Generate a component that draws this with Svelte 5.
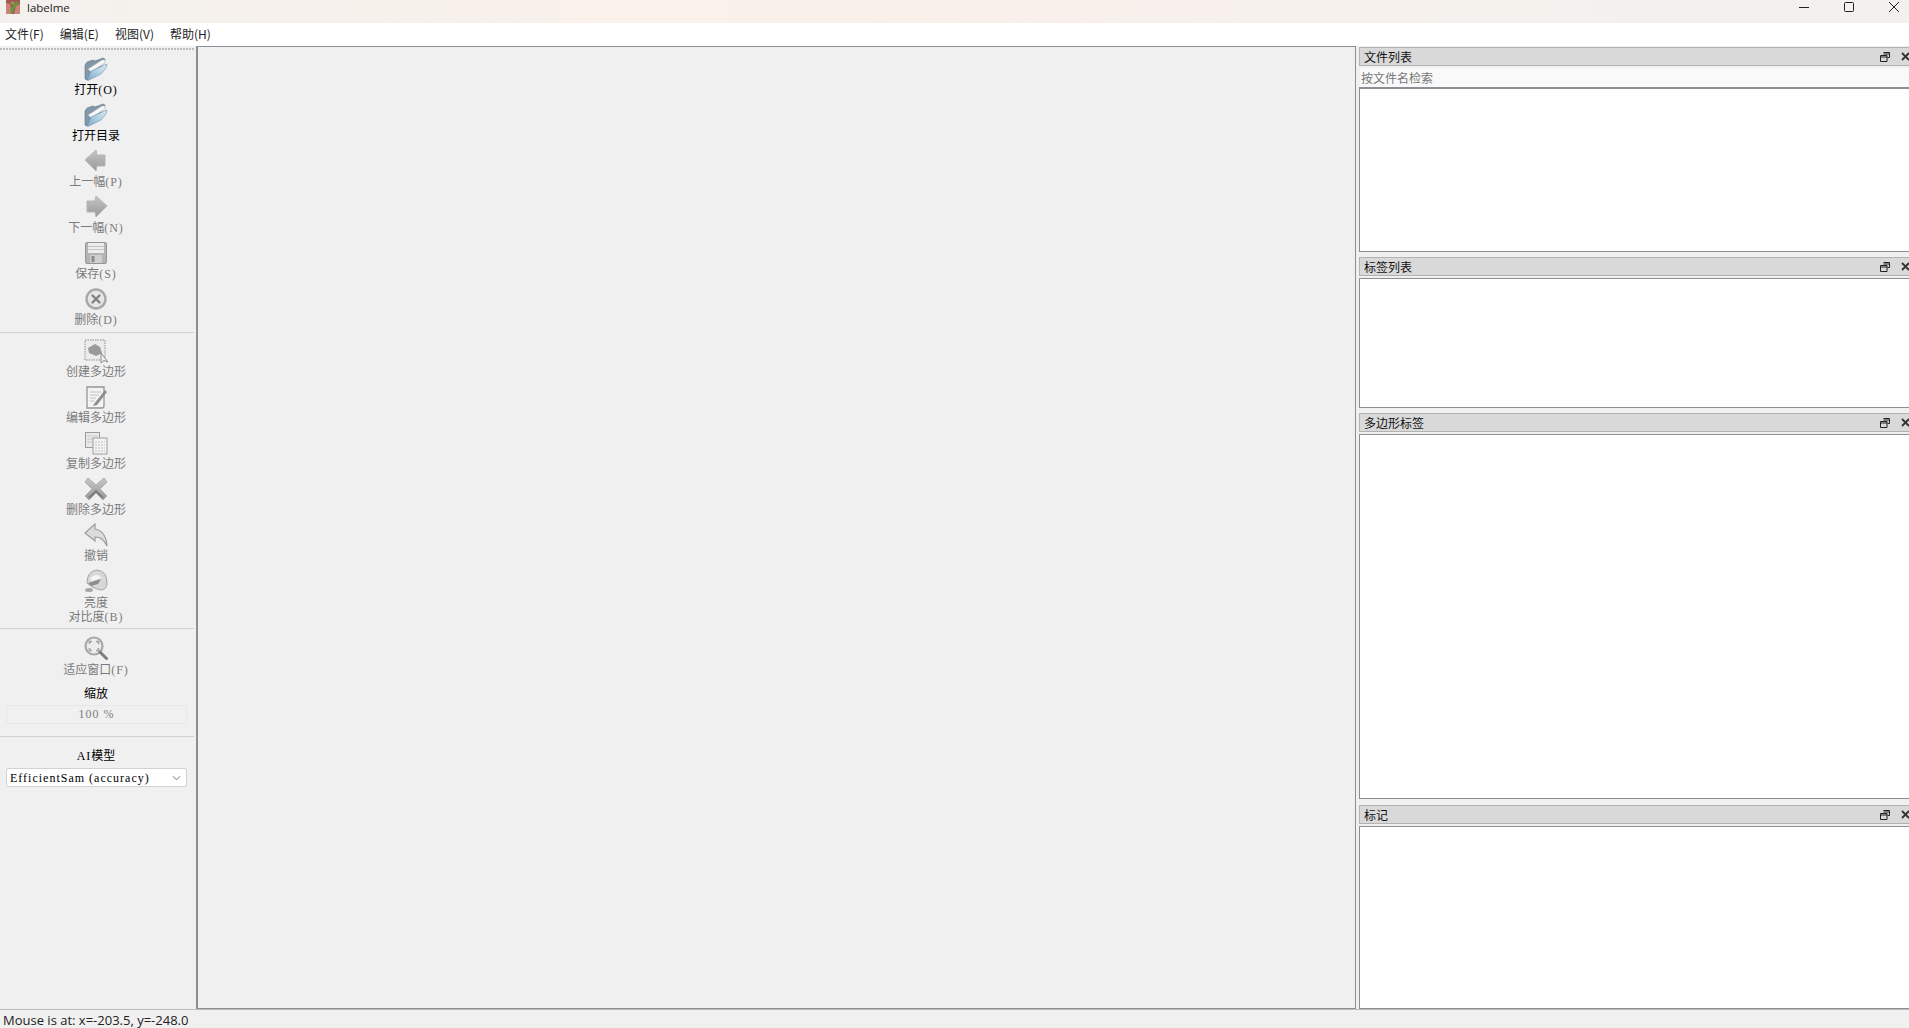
<script>
  const group1 = [
    { zh: '打开', key: '(O)', icon: 'folder', on: true },
    { zh: '打开目录', key: '', icon: 'folder', on: true },
    { zh: '上一幅', key: '(P)', icon: 'prev' },
    { zh: '下一幅', key: '(N)', icon: 'next' },
    { zh: '保存', key: '(S)', icon: 'save' },
    { zh: '删除', key: '(D)', icon: 'del' }
  ];
  const group2 = [
    { zh: '创建多边形', key: '', icon: 'create' },
    { zh: '编辑多边形', key: '', icon: 'edit' },
    { zh: '复制多边形', key: '', icon: 'copy' },
    { zh: '删除多边形', key: '', icon: 'cross' },
    { zh: '撤销', key: '', icon: 'undo' }
  ];
  const menus = [['文件', '(F)'], ['编辑', '(E)'], ['视图', '(V)'], ['帮助', '(H)']];
  const docks = [
    { title: '文件列表', search: true, h: 165 },
    { title: '标签列表', h: 130 },
    { title: '多边形标签', h: 365 },
    { title: '标记', h: 183 }
  ];
</script>

{#snippet icon(name)}
  <svg class="ico" class:off={name !== 'folder'} viewBox="0 0 24 24" width="24" height="24" aria-hidden="true">
    <defs>
      <linearGradient id="fb" x1="0" y1="1" x2="1" y2="0">
        <stop offset="0" stop-color="#7fa9c8" /><stop offset=".6" stop-color="#b9d6e8" /><stop offset="1" stop-color="#dcebf3" />
      </linearGradient>
      <linearGradient id="gr" x1="0" y1="0" x2="0" y2="1">
        <stop offset="0" stop-color="#c4c4c4" /><stop offset="1" stop-color="#9a9a9a" />
      </linearGradient>
    </defs>
    {#if name === 'folder'}
      <path d="M1 8 L3 5 L9 3 L11 4 L19 1 L21 2 L20 6 L3 23 L1 22 Z" fill="#8297a8" stroke="#5f7584" stroke-width=".6" />
      <path d="M4 12 L18 3 L21 3 L21 6 L7 15 Z" fill="#f6f7f7" stroke="#a0aeb6" stroke-width=".5" />
      <path d="M3 23 L7 14 L23 7 L22 11 L17 17 L4 23.500 Z" fill="url(#fb)" stroke="#5f8198" stroke-width=".5" />
    {:else if name === 'prev'}
      <path d="M1 11 L12 1 L13 6 L21 6 L21 17 L13 17 L12 22 Z" fill="url(#gr)" stroke="#b5b5b5" />
    {:else if name === 'next'}
      <path d="M23 11 L12 1 L11 6 L3 6 L3 17 L11 17 L12 22 Z" fill="url(#gr)" stroke="#b5b5b5" />
    {:else if name === 'save'}
      <rect x="1.5" y="1.5" width="21" height="21" rx="1.5" fill="#b4b4b4" stroke="#969696" />
      <rect x="4" y="2" width="16" height="10" fill="#ededed" />
      <path d="M4 5.500h16M4 8.500h16" stroke="#c4c4c4" />
      <rect x="6" y="14" width="12" height="8" fill="#cfcfcf" />
      <rect x="7.500" y="15" width="3" height="6" fill="#8c8c8c" />
    {:else if name === 'del'}
      <circle cx="12" cy="12" r="9.500" fill="#e6e6e6" stroke="#a8a8a8" stroke-width="2.400" />
      <path d="M8.500 8.500l7 7M15.500 8.500l-7 7" stroke="#808080" stroke-width="2.400" stroke-linecap="round" />
    {:else if name === 'create'}
      <rect x="1" y="1" width="20" height="20" fill="#ececec" stroke="#8f8f8f" stroke-dasharray="1.500 1" />
      <path d="M4 9 L11 5 L16 8 L18 14 L12 17 L5 14 Z" fill="#9a9a9a" />
      <path d="M17 14 L17 24 L20 21.500 L24 23 Z" fill="#efefef" stroke="#8a8a8a" />
    {:else if name === 'edit'}
      <path d="M3 2 H20 V21 Q20 23 18 23 H3 Z" fill="#f3f3f3" stroke="#959595" stroke-width="1.300" />
      <path d="M6 7h11M6 10h9M6 13h6M6 16h4" stroke="#c0c0c0" />
      <path d="M10 19 L21 5 L23 7 L13 20 L9 21 Z" fill="#8d8d8d" />
    {:else if name === 'copy'}
      <rect x="1.500" y="1.500" width="14" height="15" fill="#e8e8e8" stroke="#9c9c9c" />
      <rect x="9" y="7" width="14" height="16" fill="#f3f3f3" stroke="#9c9c9c" />
      <path d="M3.500 5h10M3.500 8h5M3.500 11h5M11 11h10M11 14h10M11 17h10M11 20h10" stroke="#bdbdbd" stroke-dasharray="2 1" />
    {:else if name === 'cross'}
      <path d="M4 1 L12 8 L20 1 L23 5 L16 12 L23 19 L19 23 L12 16 L5 23 L1 19 L8 12 L1 5 Z" fill="url(#gr)" stroke="#b0b0b0" />
      <path d="M5 21 L12 14 L19 21" fill="none" stroke="#7e7e7e" stroke-width="2" />
    {:else if name === 'undo'}
      <path d="M1 10 L11 1 L11 6 Q22 8 23 23 Q19 14 11 14 L11 18 Z" fill="#dcdcdc" stroke="#9c9c9c" stroke-width="1.200" />
    {:else if name === 'light'}
      <path d="M3 14 Q3 2 13 1 Q23 2 23 14 Q23 21 16 21 L8 18 Z" fill="#d7d7d7" stroke="#a5a5a5" />
      <path d="M6 10 Q8 6 14 6 L18 9 L8 12 Z" fill="#f5f5f5" />
      <path d="M4 14 L17 10 L14 15 L7 17 Z" fill="#8c8c8c" />
      <ellipse cx="5" cy="21" rx="4" ry="2" fill="#a6a6a6" />
    {:else if name === 'fit'}
      <circle cx="10" cy="10" r="8.500" fill="#ececec" stroke="#a8a8a8" stroke-width="2.200" />
      <path d="M5.500 8V5.500H8M12 5.500h2.500V8M14.500 12v2.500H12M8 14.500H5.500V12" fill="none" stroke="#a0a0a0" stroke-width="1.600" />
      <path d="M16 16l6.500 6.500" stroke="#7d7d7d" stroke-width="3" stroke-linecap="round" />
    {/if}
  </svg>
{/snippet}

{#snippet tool(t)}
  <div class="tool" class:on={t.on}>
    {@render icon(t.icon)}
    <span class="lab">{t.zh}{#if t.key}<span class="lat">{t.key}</span>{/if}</span>
  </div>
{/snippet}

<div class="win">
  <header class="title">
    <svg class="logo" viewBox="0 0 14 14" width="14" height="14" aria-hidden="true">
      <rect width="14" height="14" fill="#a5584f" />
      <path d="M0 3l4 1 2 10H0zM10 6l4-2v10H8z" fill="#c9857a" />
      <path d="M4 13 Q5 6 12 1 L13 3 Q8 7 7 13 Z" fill="#5e9c3e" />
      <path d="M4 2h5l-2 3z" fill="#7fb04f" />
    </svg>
    <span class="app">labelme</span>
    <div class="caption">
      <svg viewBox="0 0 10 10" width="10" height="10"><path d="M0 5.500h10" stroke="#222" /></svg>
      <svg viewBox="0 0 10 10" width="10" height="10"><rect x=".5" y=".5" width="9" height="9" rx="1" fill="none" stroke="#222" /></svg>
      <svg viewBox="0 0 10 10" width="10" height="10"><path d="M0 0l10 10M10 0L0 10" stroke="#222" /></svg>
    </div>
  </header>

  <nav class="menu">
    {#each menus as m}<span>{m[0]}{m[1]}</span>{/each}
  </nav>

  <main class="main">
    <aside class="bar">
      <div class="grip"></div>
      {#each group1 as t}{@render tool(t)}{/each}
      <hr />
      <div class="group2">
        {#each group2 as t}{@render tool(t)}{/each}
        <div class="tool light">
          {@render icon('light')}
          <span class="lab two">亮度<br />对比度<span class="lat">(B)</span></span>
        </div>
      </div>
      <hr />
      <div class="tool fit">
        {@render icon('fit')}
        <span class="lab">适应窗口<span class="lat">(F)</span></span>
      </div>
      <div class="zoomlab">缩放</div>
      <div class="zoomfield">100 %</div>
      <hr class="hr4" />
      <div class="ailab"><span class="lat">AI</span>模型</div>
      <div class="combo">
        <span>EfficientSam (accuracy)</span>
        <svg viewBox="0 0 10 6" width="9" height="6"><path d="M1 1l4 4 4-4" fill="none" stroke="#666" /></svg>
      </div>
    </aside>

    <section class="canvas"></section>

    <div class="docks">
      {#each docks as d}
        <div class="dock">
          <div class="dtitle">
            <span>{d.title}</span>
            <div class="dbtns">
              <svg viewBox="0 0 10 10" width="10" height="10"><path d="M3.500.5h6v5h-2M.5 3.500h6.500v6h-6.500zM.5 5h6.500M3.500 2h6" fill="none" stroke="#222" /></svg>
              <svg viewBox="0 0 9 9" width="9" height="9"><path d="M1 1l7 7M8 1l-7 7" fill="none" stroke="#333" stroke-width="1.800" /></svg>
            </div>
          </div>
          {#if d.search}<div class="search">按文件名检索</div>{/if}
          <div class="list" style="height:{d.h}px"></div>
        </div>
      {/each}
    </div>
  </main>

  <footer class="status">Mouse is at: x=-203.5, y=-248.0</footer>
</div>

<style>
  :global(body) { margin: 0; background: #f0f0f0; overflow: hidden; }
  .win {
    width: 1909px; height: 1028px; overflow: hidden; display: flex; flex-direction: column;
    background: #f0f0f0; color: #000;
    font: 12px/16px "Noto Sans CJK SC", sans-serif;
  }
  .title {
    height: 23px; flex: none; display: flex; align-items: flex-start;
    background: linear-gradient(90deg, #f3f1ee 0%, #faf1ea 35%, #f9f0eb 55%, #f3f1ee 85%);
  }
  .logo { margin: 0 0 0 6px; }
  .app { font: 11.500px/15px "Open Sans", sans-serif; margin-left: 7px; color: #222; }
  .caption { margin-left: auto; display: flex; gap: 35px; padding: 2px 10px 0 0; }
  .caption svg { display: block; }
  .menu { height: 23px; flex: none; background: #fff; display: flex; gap: 16px; padding: 0 0 2px 5px; align-items: center; box-sizing: border-box; color: #222; }
  .main { flex: none; height: 963px; display: flex; }
  .bar { width: 196px; flex: none; display: flex; flex-direction: column; align-items: stretch; }
  .grip { height: 10px; flex: none; margin-right: 2px; background: repeating-linear-gradient(90deg, #bcbcbc 0 2px, transparent 2px 3px) 0 2px / 100% 2px no-repeat; }
  .tool { height: 46px; flex: none; box-sizing: border-box; padding-top: 1px; display: flex; flex-direction: column; align-items: center; color: #7b7b7b; margin-right: 4px; }
  .tool.on { color: #000; }
  .ico { display: block; flex: none; }
  .ico.off { filter: blur(.25px); }
  .lab { display: block; line-height: 16px; white-space: nowrap; text-align: center; }
  .lat { font: 12px/1 "Liberation Serif", serif; letter-spacing: 1px; }
  hr { border: 0; height: 1px; background: #d0d0d0; margin: 0 2px 0 0; flex: none; }
  .group2 { padding-top: 5px; }
  .light { height: 60px; }
  .two { line-height: 14px; margin-top: 2px; }
  .fit { margin-top: 6px; }
  .fit .lab { margin-top: 1px; }
  .zoomlab { text-align: center; margin-right: 4px; line-height: 16px; margin-top: 4px; }
  .zoomfield { height: 19px; flex: none; margin: 4px 9px 0 6px; box-sizing: border-box; border: 1px solid #e8e8e8; text-align: center; font: 12px/17px "Liberation Serif", serif; letter-spacing: 1px; color: #7b7b7b; }
  .hr4 { margin-top: 12px; }
  .ailab { height: 16px; flex: none; text-align: center; margin: 10px 4px 0 0; line-height: 16px; }
  .combo { height: 19px; flex: none; margin: 5px 9px 0 6px; box-sizing: border-box; border: 1px solid #d2d2d2; border-radius: 2px; background: #fff; display: flex; align-items: center; justify-content: space-between; padding: 0 5px 0 3px; font: 12px/16px "Liberation Serif", serif; letter-spacing: 1px; white-space: nowrap; }
  .canvas { width: 1160px; flex: none; box-sizing: border-box; border: 1px solid #8b9097; border-left-width: 2px; }
  .docks { margin-left: 3px; width: 560px; flex: none; }
  .dock { margin-top: 5px; width: 560px; }
  .dock:first-child { margin-top: 1px; }
  .dock:last-child { margin-top: 6px; }
  .dtitle { height: 19px; box-sizing: border-box; background: #d9d9d9; border: 1px solid #b2b2b2; border-width: 1px 0 1px 1px; display: flex; align-items: center; padding-left: 4px; color: #111; }
  .dbtns { position: absolute; left: 1880px; display: flex; gap: 11px; align-items: center; }
  .dbtns svg { display: block; }
  .search { height: 19px; margin: 2px 0 0 1px; background: #f9f9f9; color: #777; padding-left: 1px; line-height: 19px; }
  .list { background: #fff; box-sizing: border-box; border: 1px solid #8b8f95; margin-top: 2px; }
  .search + .list { margin-top: 0; border-top-width: 2px; }
  .status { flex: none; height: 19px; box-sizing: border-box; border-top: 1px solid #bbb; padding-left: 3px; font: 13px/21px "Open Sans", sans-serif; color: #222; white-space: nowrap; }
</style>
